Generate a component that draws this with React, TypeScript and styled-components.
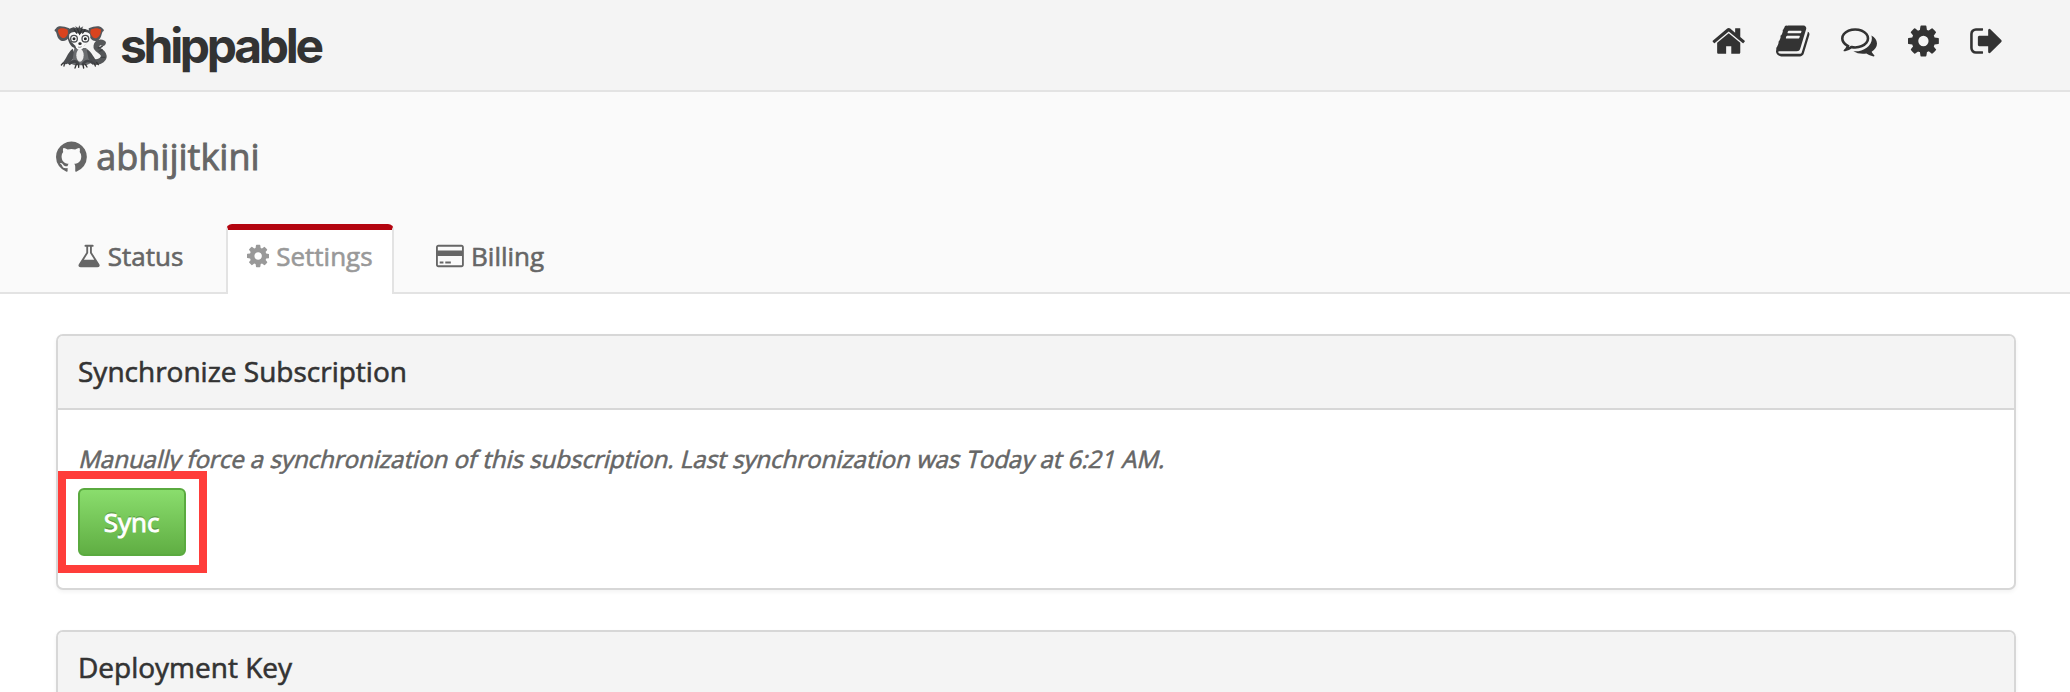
import React from "react";
import styled, { createGlobalStyle, css } from "styled-components";

const GlobalStyle = createGlobalStyle`
  * { box-sizing: border-box; }
  body {
    margin: 0;
    background: #fff;
    color: #333;
    font-family: "Open Sans", "Noto Sans", sans-serif;
    overflow: hidden;
  }
`;

/* Glyph outlines sit on a 1792-unit em; x and advance give each glyph's own box. */
const GLYPHS = {
  home: {
    x: 64,
    advance: 1664,
    d: "M1472 992v480q0 26-19 45t-45 19h-384v-384h-256v384h-384q-26 0-45-19t-19-45v-480q0-1 .5-3t.5-3l575-474 575 474q1 2 1 6zm223-69l-62 74q-8 9-21 11h-3q-13 0-21-7l-692-577-692 577q-12 8-24 7-13-2-21-11l-62-74q-8-10-7-23.5t11-21.5l719-599q32-26 76-26t76 26l244 204v-195q0-14 9-23t23-9h192q14 0 23 9t9 23v408l219 182q10 8 11 21.5t-7 23.5z",
  },
  book: {
    x: 64,
    advance: 1664,
    d: "M1703 478q40 57 18 129l-275 906q-19 64-76.5 107.5t-122.5 43.5h-923q-77 0-148.5-53.5t-99.5-131.5q-24-67-2-127 0-4 3-27t4-37q1-8-3-21.5t-3-19.5q2-11 8-21t16.5-23.5 16.5-23.5q23-38 45-91.5t30-91.5q3-10 .5-30t-.5-28q3-11 17-28t17-23q21-36 42-92t25-90q1-9-2.5-32t.5-28q4-13 22-30.5t22-22.5q19-26 42.5-84.5t27.5-96.5q1-8-3-25.5t-2-26.5q2-8 9-18t18-23 17-21q8-12 16.5-30.5t15-35 16-36 19.5-32 26.5-23.5 36-11.5 47.5 5.5l-1 3q38-9 51-9h761q74 0 114 56t18 130l-274 906q-36 119-71.5 153.5t-128.5 34.5h-869q-27 0-38 15-11 16-1 43 24 70 144 70h923q29 0 56-15.5t35-41.5l300-987q7-22 5-57 38 15 59 43zm-1064 2q-4 13 2 22.5t20 9.5h608q13 0 25.5-9.5t16.5-22.5l21-64q4-13-2-22.5t-20-9.5h-608q-13 0-25.5 9.5t-16.5 22.5zm-83 256q-4 13 2 22.5t20 9.5h608q13 0 25.5-9.5t16.5-22.5l21-64q4-13-2-22.5t-20-9.5h-608q-13 0-25.5 9.5t-16.5 22.5z",
  },
  comments: {
    x: 0,
    advance: 1792,
    d: "M704 384q-153 0-286 52t-211.5 141-78.5 191q0 82 53 158t149 132l97 56-35 84q34-20 62-39l44-31 53 10q78 14 153 14 153 0 286-52t211.5-141 78.5-191-78.5-191-211.5-141-286-52zm0-128q191 0 353.5 68.5t256.5 186.5 94 257-94 257-256.5 186.5-353.5 68.5q-86 0-176-16-124 88-278 128-36 9-86 16h-3q-11 0-20.5-8t-11.5-21q-1-3-1-6.5t.5-6.5 2-6l2.5-5 3.5-5.5 4-5 4.5-5 4-4.5q5-6 23-25t26-29.5 22.5-29 25-38.5 20.5-44q-124-72-195-177t-71-224q0-139 94-257t256.5-186.5 353.5-68.5zm822 1169q10 24 20.5 44t25 38.5 22.5 29 26 29.5 23 25q1 1 4 4.5t4.5 5 4 5 3.5 5.5l2.5 5 2 6 .5 6.5-1 6.5q-3 14-13 22t-22 7q-50-7-86-16-154-40-278-128-90 16-176 16-271 0-472-132 58 4 88 4 161 0 309-45t264-129q125-92 192-212t67-254q0-77-23-152 129 71 204 178t75 230q0 120-71 224.5t-195 176.5z",
  },
  cog: {
    x: 128,
    advance: 1536,
    d: "M1152 896q0-106-75-181t-181-75-181 75-75 181 75 181 181 75 181-75 75-181zm512-109v222q0 12-8 23t-20 13l-185 28q-19 54-39 91 35 50 107 138 10 12 10 25t-9 23q-27 37-99 108t-94 71q-12 0-26-9l-138-108q-44 23-91 38-16 136-29 186-7 28-36 28h-222q-14 0-24.5-8.5t-11.5-21.5l-28-184q-49-16-90-37l-141 107q-10 9-25 9-14 0-25-11-126-114-165-168-7-10-7-23 0-12 8-23 15-21 51-66.5t54-70.5q-27-50-41-99l-183-27q-13-2-21-12.5t-8-23.5v-222q0-12 8-23t19-13l186-28q14-46 39-92-40-57-107-138-10-12-10-24 0-10 9-23 26-36 98.5-107.5t94.5-71.5q13 0 26 10l138 107q44-23 91-38 16-136 29-186 7-28 36-28h222q14 0 24.5 8.5t11.5 21.5l28 184q49 16 90 37l142-107q9-9 24-9 13 0 25 10 129 119 165 170 7 8 7 22 0 12-8 23-15 21-51 66.5t-54 70.5q26 50 41 98l183 28q13 2 21 12.5t8 23.5z",
  },
  signOut: {
    x: 56,
    advance: 1664,
    d: "M704 1440q0 4 1 20t.5 26.5-3 23.5-10 19.5-20.5 6.5h-320q-119 0-203.5-84.5t-84.5-203.5v-704q0-119 84.5-203.5t203.5-84.5h320q13 0 22.5 9.5t9.5 22.5q0 4 1 20t.5 26.5-3 23.5-10 19.5-20.5 6.5h-320q-66 0-113 47t-47 113v704q0 66 47 113t113 47h312l11.5 1 11.5 3 8 5.5 7 9 2 13.5zm928-544q0 26-19 45l-544 544q-19 19-45 19t-45-19-19-45v-288h-448q-26 0-45-19t-19-45v-384q0-26 19-45t45-19h448v-288q0-26 19-45t45-19 45 19l544 544q19 19 19 45z",
  },
  flask: {
    x: 64,
    advance: 1664,
    d: "M1591 1448q56 89 21.5 152.5t-140.5 63.5h-1152q-106 0-140.5-63.5t21.5-152.5l503-793v-399h-64q-26 0-45-19t-19-45 19-45 45-19h512q26 0 45 19t19 45-19 45-45 19h-64v399zm-779-725l-272 429h712l-272-429-20-31v-436h-128v436z",
  },
  card: {
    x: 0,
    advance: 1920,
    d: "M160 128h1600q66 0 113 47t47 113v1216q0 66-47 113t-113 47h-1600q-66 0-113-47t-47-113v-1216q0-66 47-113t113-47zm0 128q-13 0-22.500 9.500t-9.500 22.500v224h1664v-224q0-13-9.500-22.500t-22.500-9.500zm1600 1280q13 0 22.500-9.500t9.500-22.500v-608h-1664v608q0 13 9.500 22.500t22.500 9.500zm-1504-128v-128h256v128zm384 0v-128h384v128z",
  },
  github: {
    x: 128,
    advance: 1536,
    d: "M896 128q209 0 385.500 103t279.500 279.500 103 385.500q0 251-146.500 451.500t-378.500 277.500q-27 5-40-7t-13-30q0-3 .5-76.500t.5-134.500q0-97-52-142 57-6 102.500-18t94-39 81-66.500 53-105 20.500-150.500q0-119-79-206 37-91-8-204-28-9-81 11t-92 44l-38 24q-93-26-192-26t-192 26q-16-11-42.500-27t-83.500-38.500-85-13.500q-45 113-8 204-79 87-79 206 0 85 20.500 150t52.500 105 80.500 67 94 39 102.500 18q-39 36-49 103-21 10-45 15t-57 5-65.500-21.500-55.500-62.500q-19-32-48.500-52t-49.500-24l-20-3q-21 0-29 4.500t-5 11.500 9 14 13 12l7 5q22 10 43.500 38t31.500 51l10 23q13 38 44 61.500t67 30 69.500 7 55.500-3.500l23-4q0 38 .5 88.500t.5 54.500q0 18-13 30t-40 7q-232-77-378.500-277.500t-146.500-451.500q0-209 103-385.500t279.500-279.500 385.500-103z",
  },
};

type GlyphName = keyof typeof GLYPHS;

const GlyphSvg = styled.svg`
  display: block;
  flex: none;
  fill: currentColor;
`;

function Glyph({ name, size }: { name: GlyphName; size: number }) {
  const g = GLYPHS[name];
  return (
    <GlyphSvg
      width={(g.advance / 1792) * size}
      height={size}
      viewBox={`${g.x} 0 ${g.advance} 1792`}
      aria-hidden
    >
      <path d={g.d} />
    </GlyphSvg>
  );
}

const Page = styled.div`
  height: 692px;
  overflow: hidden;
`;

const TopBar = styled.header`
  display: flex;
  justify-content: space-between;
  align-items: flex-start;
  height: 92px;
  padding: 18px 66.7px 0 50px;
  background: #f4f4f4;
  border-bottom: 2px solid #e3e3e3;
`;

const Brand = styled.a`
  display: flex;
  align-items: flex-start;
`;

const Mascot = styled.svg`
  display: block;
  width: 62px;
  height: 56px;
`;

const Wordmark = styled.span`
  margin: 0 0 0 8px;
  font: 700 48px/56px Inter, "Liberation Sans", sans-serif;
  letter-spacing: -3.300px;
  color: #333;
`;

const Nav = styled.nav`
  display: flex;
  gap: 31.100px;
  padding-top: 4.800px;
`;

const NavLink = styled.a`
  display: block;
  color: #333;
`;

const Masthead = styled.section`
  display: flex;
  flex-direction: column;
  justify-content: space-between;
  height: 202px;
  padding: 40px 56px 0;
  background: #fafafa;
  border-bottom: 2px solid #e3e3e3;
`;

const Owner = styled.h1`
  display: flex;
  align-items: center;
  gap: 9.400px;
  margin: 0;
  font-size: 36px;
  font-weight: 400;
  line-height: 50px;
  color: #666;
  -webkit-text-stroke: 0.900px #666;
`;

const Tabs = styled.div`
  display: flex;
  gap: 21.500px;
  margin-bottom: -2px;
`;

const Tab = styled.a<{ $active?: boolean }>`
  display: flex;
  align-items: center;
  gap: 6.800px;
  height: 70px;
  padding: 0 19.500px 13px 18.800px;
  border: solid transparent;
  border-width: 6px 2px 0;
  font-size: 26px;
  line-height: 36px;
  color: #666;
  -webkit-text-stroke: 0.600px currentColor;
  ${(p) =>
    p.$active &&
    css`
      color: #999;
      background: #fff;
      border-color: #b3040f #e3e3e3 #e3e3e3;
      border-radius: 6px 6px 0 0;
    `}
`;

const Content = styled.main`
  display: flex;
  flex-direction: column;
  gap: 40px;
  padding: 40px 54px 0 56px;
`;

const Panel = styled.section`
  border: 2px solid #d7d7d7;
  border-radius: 7px;
  background: #fff;
  box-shadow: 0 2px 4px rgba(0, 0, 0, 0.05);
`;

const PanelTitle = styled.h2`
  height: 74px;
  margin: 0;
  padding: 0 20px;
  border-bottom: 2px solid #d7d7d7;
  border-radius: 5px 5px 0 0;
  background: #f4f4f4;
  font-size: 28px;
  font-weight: 400;
  line-height: 70px;
  -webkit-text-stroke: 0.600px #333;
`;

const PanelBody = styled.div`
  height: 178px;
  padding: 32px 20px 0;
`;

const Note = styled.p`
  width: max-content;
  height: 34px;
  margin: 0 0 12px;
  font-size: 24px;
  line-height: 34px;
  color: #666;
  transform: skewX(-14deg);
  transform-origin: 0 26px;
  -webkit-text-stroke: 0.600px #666;
`;

const SyncArea = styled.div`
  position: relative;
  width: 108px;
`;

const SyncButton = styled.button`
  display: block;
  width: 108px;
  height: 68px;
  padding: 0 1px 1px 0;
  border: 2px solid #5aaa3f;
  border-radius: 6px;
  background: linear-gradient(#8add6d, #60ae43);
  color: #fff;
  font: 400 26px/36px "Open Sans", sans-serif;
  text-shadow: 0 -2px 0 rgba(0, 0, 0, 0.2);
  -webkit-text-stroke: 0.900px #fff;
`;

const Highlight = styled.div`
  position: absolute;
  top: -17px;
  left: -20px;
  width: 149px;
  height: 102px;
  border: 8px solid #ff3d3a;
`;

function Lemur() {
  return (
    <Mascot viewBox="0 0 186 168" aria-hidden>
      <path
        d="M134 132C150 134 166 122 160 109C155 98 137 96 139 84C141 74 151 71 159 75"
        fill="none"
        stroke="#555759"
        strokeWidth="17"
        strokeLinecap="round"
      />
      <path d="M143 90q12-1 15-7M146 101l12-6M152 118l14 0" stroke="#404244" strokeWidth="4" fill="none" />
      <path d="M68 92C52 104 49 124 37 135q4 6 14 3C62 135 72 119 76 112zM110 92c16 10 22 30 34 41q-3 7-15 4c-12-4-20-20-25-28z" fill="#4b4d50" />
      <path d="M73 90h36l7 34 12 9-19 9H74l-19-8 13-10z" fill="#6a6c6f" />
      <path d="M56 139q20-18 30 1M97 141q12-22 34-4" fill="none" stroke="#424447" strokeWidth="8" />
      <ellipse cx="90" cy="112" rx="11" ry="19" fill="#ececec" />
      <path d="M38 136l-4 5M43 138l-1 6M140 134l5 6M134 138l2 6M79 139l-4 11M86 141v7M99 141l2 9M106 139l5 8" stroke="#333" strokeWidth="4" strokeLinecap="round" />
      <path d="M70 28l9 2-4-6 10 6 3-8 3 8 9-5-4 7c12 0 22 4 27 10-3 24-12 32-24 44l-12 8H81L66 86C54 74 51 55 50 40c4-6 12-10 20-12z" fill="#494b4e" />
      <path d="M58 31C41 24 23 22 19 30c-4 5-6 5-5 9 8 1 4 22 19 29 10 4 18-2 26-12z" fill="#54565a" />
      <path d="M53 35C40 30 30 29 24 36c0 11 5 20 13 24 8 2 15-6 17-15z" fill="#d9431f" />
      <path d="M116 31c17-8 35-9 40-1 4 4 7 5 5 9-8 2-4 22-18 29-11 4-18-2-25-12z" fill="#54565a" />
      <path d="M122 35c11-6 24-6 31 0 0 13-5 21-14 26-8 1-16-8-18-17z" fill="#d9431f" />
      <path d="M89 50c7-9 22-11 31-1 5 18-9 25-18 34-2 9-8 13-13 13s-11-4-13-13c-10-9-22-17-18-34 9-10 24-8 31 1z" fill="#fafafa" />
      <path d="M82 32l7 16 8-16M72 34l9 13M106 34l-9 13" stroke="#303234" strokeWidth="4" fill="none" />
      <g fill="#fff" stroke="#4b4d50" strokeWidth="4">
        <circle cx="72" cy="62" r="10" />
        <circle cx="106" cy="62" r="10" />
      </g>
      <circle cx="72" cy="62" r="4.500" fill="#292b2d" />
      <circle cx="106" cy="62" r="4.500" fill="#292b2d" />
      <ellipse cx="90" cy="77" rx="5" ry="4" fill="#292b2d" />
      <path d="M84 87q6 3 11-1" stroke="#666" strokeWidth="2" fill="none" />
    </Mascot>
  );
}

const NAV_ITEMS: GlyphName[] = ["home", "book", "comments", "cog", "signOut"];

const TAB_ITEMS: { icon: GlyphName; label: string; active?: boolean }[] = [
  { icon: "flask", label: "Status" },
  { icon: "cog", label: "Settings", active: true },
  { icon: "card", label: "Billing" },
];

export default function App() {
  return (
    <Page>
      <GlobalStyle />
      <TopBar>
        <Brand>
          <Lemur />
          <Wordmark>shippable</Wordmark>
        </Brand>
        <Nav>
          {NAV_ITEMS.map((name) => (
            <NavLink key={name}>
              <Glyph name={name} size={36} />
            </NavLink>
          ))}
        </Nav>
      </TopBar>
      <Masthead>
        <Owner>
          <Glyph name="github" size={36} />
          abhijitkini
        </Owner>
        <Tabs>
          {TAB_ITEMS.map((t) => (
            <Tab key={t.label} $active={t.active}>
              <Glyph name={t.icon} size={26} />
              {t.label}
            </Tab>
          ))}
        </Tabs>
      </Masthead>
      <Content>
        <Panel>
          <PanelTitle>Synchronize Subscription</PanelTitle>
          <PanelBody>
            <Note>
              Manually force a synchronization of this subscription. Last synchronization was Today at 6:21 AM.
            </Note>
            <SyncArea>
              <SyncButton>Sync</SyncButton>
              <Highlight />
            </SyncArea>
          </PanelBody>
        </Panel>
        <Panel>
          <PanelTitle>Deployment Key</PanelTitle>
          <PanelBody />
        </Panel>
      </Content>
    </Page>
  );
}
